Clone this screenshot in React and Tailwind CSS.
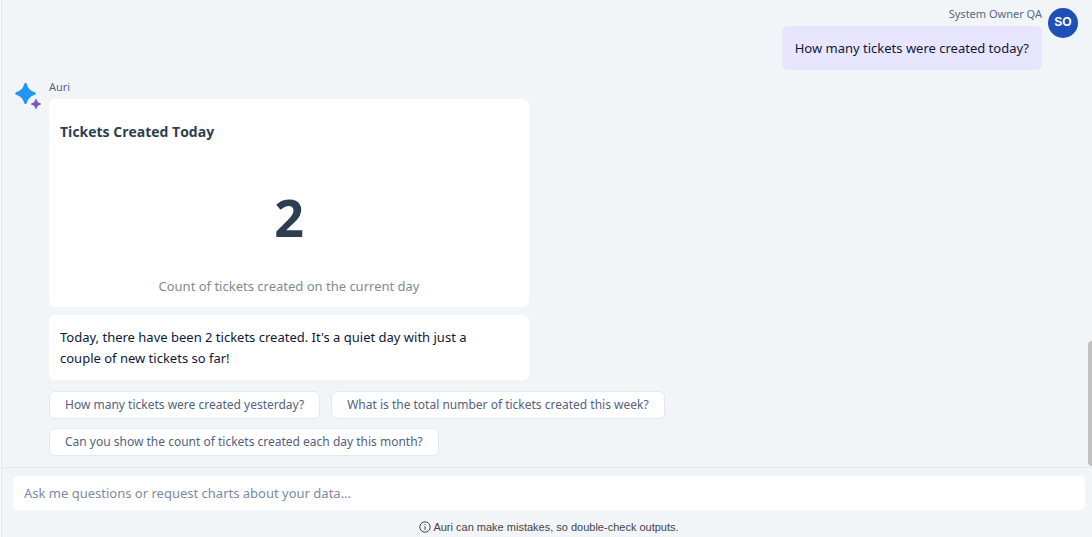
import { useState } from "react";

const suggestions = [
  "How many tickets were created yesterday?",
  "What is the total number of tickets created this week?",
  "Can you show the count of tickets created each day this month?",
];

const AuriIcon = () => (
  <svg viewBox="0 0 28 28" className="size-7" aria-hidden="true">
    <path
      d="M11.5 1 C12.2 1 12.6 1.5 12.9 2.3 C14.2 6.4 16.1 8.6 20.4 10.1 C22.4 10.8 22.4 12.2 20.4 12.9 C16.1 14.4 14.2 16.6 12.9 20.7 C12.4 22.4 10.6 22.4 10.1 20.7 C8.8 16.6 6.9 14.4 2.6 12.9 C0.6 12.2 0.6 10.8 2.6 10.1 C6.9 8.6 8.8 6.4 10.1 2.3 C10.4 1.5 10.8 1 11.5 1 Z"
      fill="#2196f3"
    />
    <path
      d="M22 17 C22.4 17 22.6 17.3 22.8 17.8 C23.3 19.8 24.2 20.7 26.2 21.2 C27.3 21.6 27.3 22.4 26.2 22.8 C24.2 23.3 23.3 24.2 22.8 26.2 C22.4 27.3 21.6 27.3 21.2 26.2 C20.7 24.2 19.8 23.3 17.8 22.8 C16.7 22.4 16.7 21.6 17.8 21.2 C19.8 20.7 20.7 19.8 21.2 17.8 C21.4 17.3 21.6 17 22 17 Z"
      fill="#7e57c2"
    />
  </svg>
);

const InfoIcon = () => (
  <svg viewBox="0 0 12 12" className="size-3" fill="none" aria-hidden="true">
    <circle cx="6" cy="6" r="5.2" stroke="#333" strokeWidth="0.9" />
    <path d="M6 5.2v3.6" stroke="#333" strokeWidth="0.9" />
    <circle cx="6" cy="3.5" r="0.6" fill="#333" />
  </svg>
);

const UserMessage = () => (
  <div className="flex justify-end gap-1.5 pr-3.5">
    <div className="flex flex-col items-end">
      <span className="text-[11px] leading-3 text-[#5a6785]">
        System Owner QA
      </span>
      <p className="mt-1.5 rounded-md bg-[#e8e5fe] px-[13px] py-[11px] text-[13px] leading-[22px] text-[#10183a]">
        How many tickets were created today?
      </p>
    </div>
    <div className="flex size-[30px] items-center justify-center rounded-full bg-[#1e50b8] pb-0.5 font-['Liberation_Sans',sans-serif] text-xs font-bold text-white">
      SO
    </div>
  </div>
);

const AssistantMessage = () => (
  <div className="flex gap-[7px] pl-3">
    <div className="shrink-0 pt-px">
      <AuriIcon />
    </div>
    <div className="min-w-0 flex-1">
      <p className="text-[11px] leading-3 text-[#5a6785]">Auri</p>

      {/* metric card */}
      <section className="mt-1.5 h-52 max-w-[480px] rounded-md bg-white px-[11px] pt-[23px]">
        <h2 className="font-['Open_Sans',sans-serif] text-sm leading-5 font-bold text-[#2c3e50]">
          Tickets Created Today
        </h2>
        <p className="mt-[39px] text-center font-['Open_Sans',sans-serif] text-[52px] leading-[72px] font-bold text-[#2c3e50]">
          2
        </p>
        <p className="mt-[23px] text-center text-[13px] leading-5 text-[#7f8c8d]">
          Count of tickets created on the current day
        </p>
      </section>

      {/* answer */}
      <p className="mt-2 max-w-[480px] rounded-md bg-white pt-3 pr-10 pb-[11px] pl-[11px] text-[13px] leading-[21px] text-[#10183a]">
        Today, there have been 2 tickets created. It's a quiet day with just a
        couple of new tickets so far!
      </p>

      {/* follow-up questions */}
      <div className="mt-[11px] flex max-w-[640px] flex-wrap gap-x-[11px] gap-y-[9px]">
        {suggestions.map((text) => (
          <button
            key={text}
            type="button"
            className="h-7 rounded-md border border-[#e5e7ed] bg-white px-[15px] text-xs leading-5 text-[#55617f]"
          >
            {text}
          </button>
        ))}
      </div>
    </div>
  </div>
);

const App = () => {
  const [question, setQuestion] = useState("");

  return (
    <div className="h-screen bg-[#f7f8fa] pl-px">
      <div className="flex h-full flex-col overflow-hidden border-l border-[#e3e7ee] bg-[#f2f5f8] font-['Noto_Sans','Open_Sans',sans-serif]">
        {/* conversation */}
        <main className="relative flex min-h-0 flex-1 flex-col gap-[11px] overflow-hidden pt-2">
          <UserMessage />
          <AssistantMessage />
          <div className="absolute right-0 bottom-px h-[125px] w-1 rounded-l-sm bg-[#c1c1c1]" />
        </main>

        {/* question box */}
        <footer className="border-t border-[#e5e8ed] pt-2 pr-[7px] pl-[11px]">
          <input
            type="text"
            aria-label="Question"
            value={question}
            onChange={(e) => setQuestion(e.target.value)}
            placeholder="Ask me questions or request charts about your data..."
            className="block h-[34px] w-full rounded-md bg-white px-[11px] text-[13px] text-[#10183a] placeholder:text-[#7d89a5] focus:outline-none"
          />
          <p className="flex h-[27px] items-center justify-center gap-0.5 pt-1.5 font-['Liberation_Sans',Arial,sans-serif] text-[11px] leading-4 text-[#444]">
            <InfoIcon />
            Auri can make mistakes, so double-check outputs.
          </p>
        </footer>
      </div>
    </div>
  );
};

export default App;
